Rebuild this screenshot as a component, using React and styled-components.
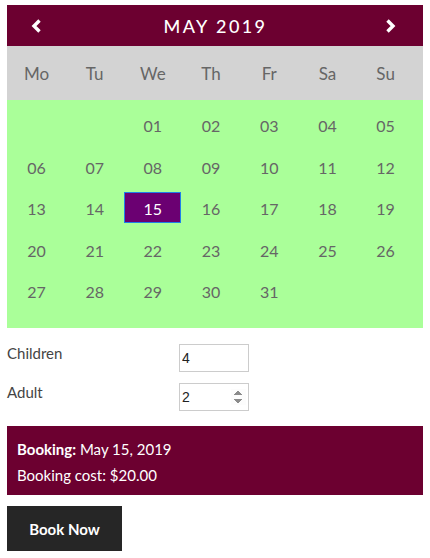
import React from 'react';
import styled, { createGlobalStyle } from 'styled-components';

const COLORS = {
  wine: '#6c0030',
  gray: '#d3d3d3',
  green: '#aaff99',
  selected: '#6b0072',
  text: '#666666',
  dark: '#262626',
};

const WEEKDAYS = ['Mo', 'Tu', 'We', 'Th', 'Fr', 'Sa', 'Su'];
const BLANKS = 2;
const DAYS = Array.from({ length: 31 }, (_, i) => i + 1);
const SELECTED = 15;

const GlobalStyle = createGlobalStyle`
  html, body {
    margin: 0;
    padding: 0;
    background: #ffffff;
  }
  body {
    font-family: Lato, "Noto Sans", sans-serif;
  }
`;

const Page = styled.div`
  padding: 5px 7px 0 7px;
  width: 416px;
`;

const Calendar = styled.div`
  display: flex;
  flex-direction: column;
`;

const Header = styled.div`
  height: 41px;
  background: ${COLORS.wine};
  display: flex;
  align-items: center;
  justify-content: space-between;
  padding: 0 27px 0 24px;
  color: #ffffff;
`;

const Arrow = styled.button`
  background: none;
  border: 0;
  padding: 0;
  width: 11px;
  height: 14px;
  display: flex;
  cursor: pointer;
`;

const Title = styled.div`
  font-size: 18px;
  font-weight: 500;
  letter-spacing: 2.4px;
  padding-left: 4px;
`;

const Grid = styled.div`
  display: grid;
  grid-template-columns: repeat(7, 57px);
  column-gap: 1.2px;
  padding-left: 1px;
`;

const WeekRow = styled(Grid)`
  background: ${COLORS.gray};
  height: 54px;
  align-items: center;
`;

const WeekDay = styled.div`
  text-align: center;
  font-size: 17px;
  color: ${COLORS.text};
`;

const DaysGrid = styled(Grid)`
  background: ${COLORS.green};
  grid-auto-rows: 31px;
  row-gap: 10.5px;
  padding-top: 9px;
  padding-bottom: 22px;
`;

const Day = styled.div`
  display: flex;
  align-items: center;
  justify-content: center;
  font-size: 16px;
  color: ${(p) => (p.$selected ? '#ffffff' : COLORS.text)};
  background: ${(p) => (p.$selected ? COLORS.selected : 'transparent')};
  border: 1px solid ${(p) => (p.$selected ? '#1f7fe8' : 'transparent')};
  padding-top: 2px;
  box-sizing: border-box;
`;

const Form = styled.div`
  display: grid;
  grid-template-columns: 172px 70px;
  row-gap: 11px;
  padding-top: 16px;
  align-items: center;
`;

const Label = styled.label`
  font-size: 15px;
  color: #444444;
  align-self: start;
`;

const Input = styled.input`
  width: 70px;
  height: 28px;
  box-sizing: border-box;
  border: 1px solid #cccccc;
  font-family: "Liberation Sans", Arial, sans-serif;
  font-size: 14px;
  color: #222222;
  padding: 1px 2px;
  outline: none;
  &::-webkit-inner-spin-button {
    opacity: ${(p) => (p.$spin ? 1 : 0)};
  }
`;

const Summary = styled.div`
  margin-top: 15px;
  background: ${COLORS.wine};
  color: #ffffff;
  padding: 10px 10px 12px 10px;
  font-size: 15px;
  line-height: 26px;
  height: 69px;
  box-sizing: border-box;
`;

const Button = styled.button`
  margin-top: 11px;
  background: ${COLORS.dark};
  color: #ffffff;
  border: 0;
  width: 115px;
  height: 45px;
  font-family: Lato, "Noto Sans", sans-serif;
  font-size: 15px;
  font-weight: 700;
  cursor: pointer;
`;

const Chevron = ({ dir }) => (
  <svg width="11" height="14" viewBox="0 0 11 14">
    <polyline
      points={dir === 'left' ? '8.5,1.5 3,7 8.5,12.5' : '2.5,1.5 8,7 2.5,12.5'}
      fill="none"
      stroke="#ffffff"
      strokeWidth="3.4"
      strokeLinejoin="miter"
    />
  </svg>
);

const pad = (n) => String(n).padStart(2, '0');

const App = () => {
  return (
    <Page>
      <GlobalStyle />
      <Calendar>
        <Header>
          <Arrow aria-label="Previous month">
            <Chevron dir="left" />
          </Arrow>
          <Title>MAY 2019</Title>
          <Arrow aria-label="Next month">
            <Chevron dir="right" />
          </Arrow>
        </Header>
        <WeekRow>
          {WEEKDAYS.map((d) => (
            <WeekDay key={d}>{d}</WeekDay>
          ))}
        </WeekRow>
        <DaysGrid>
          {Array.from({ length: BLANKS }, (_, i) => (
            <Day key={'b' + i} />
          ))}
          {DAYS.map((d) => (
            <Day key={d} $selected={d === SELECTED}>
              {pad(d)}
            </Day>
          ))}
        </DaysGrid>
      </Calendar>

      <Form>
        <Label>Children</Label>
        <Input type="number" defaultValue={4} />
        <Label>Adult</Label>
        <Input type="number" defaultValue={2} $spin />
      </Form>

      <Summary>
        <div>
          <b>Booking:</b> May 15, 2019
        </div>
        <div>Booking cost: $20.00</div>
      </Summary>

      <Button>Book Now</Button>
    </Page>
  );
};

export default App;
